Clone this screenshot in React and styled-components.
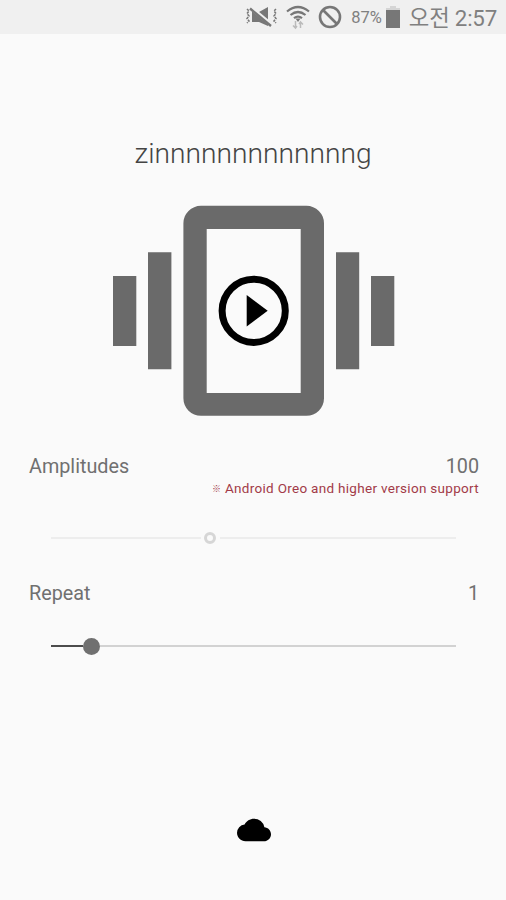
import React, { useState } from 'react'
import styled, { createGlobalStyle } from 'styled-components';

const App = () => {
    const [playing, setPlaying] = useState(false);

    return (
        <>
            <GlobalStyle />
            <Screen>
                <StatusBar>
                    <MuteIcon />
                    <WifiIcon />
                    <BlockedIcon />
                    <Percent>87%</Percent>
                    <BatteryIcon />
                    <Clock>오전 2:57</Clock>
                </StatusBar>
                <Title>zinnnnnnnnnnnnng</Title>
                <VibrateButton aria-pressed={playing} onClick={() => setPlaying(!playing)}>
                    <PhoneIcon />
                </VibrateButton>
                <Setting $space={35}>
                    <Row>
                        <Label>Amplitudes</Label>
                        <Label>100</Label>
                    </Row>
                    <Notice><Mark>※</Mark> Android Oreo and higher version support</Notice>
                    <Slider $top={30}>
                        <Track $width="150px" $color="#ededed" />
                        <Ring />
                        <Track $color="#ededed" />
                    </Slider>
                </Setting>
                <Setting $space={0}>
                    <Row>
                        <Label>Repeat</Label>
                        <Label>1</Label>
                    </Row>
                    <Slider $top={31}>
                        <Track $width="32px" $color="#4c4c4c" />
                        <Thumb />
                        <Track $color="#d2d2d2" />
                    </Slider>
                </Setting>
                <Footer>
                    <CloudIcon />
                </Footer>
            </Screen>
        </>
    )
}

const MuteIcon = () => (
    <svg width="34" height="24" viewBox="0 0 34 24" fill="none" stroke="#777">
        <path d="M8 7h7l9-5v19l-9-4H8z" fill="#777" stroke="none" />
        <path d="M6 2l23 19" stroke="#f0f0f0" strokeWidth="4" />
        <path d="M6 3.500l21 17.500" strokeWidth="2.400" />
        <path d="M3 4l2 2-2 2.500 2 2.500-2 2.500 2 2.500-2 2" strokeWidth="1.500" strokeDasharray="2.500 1" />
        <path d="M32 4l-2 2 2 2.500-2 2.500 2 2.500-2 2.500 2 2" strokeWidth="1.500" strokeDasharray="2.500 1" />
    </svg>
)

const WifiIcon = () => (
    <svg width="24" height="26" viewBox="0 0 24 26" fill="none" stroke="#777">
        <path d="M1 7.500Q12-1.500 23 7.500M4.500 11Q12 5 19.500 11M8 14.200Q12 11 16 14.200" strokeWidth="2.200" />
        <path d="M9.500 14.500h5L12 18z" fill="#777" stroke="none" />
        <path d="M9.500 17v7M7 21.500L9.500 24l1.500-2M14.500 24v-6M13 20l1.500-2 2.500 2.500" stroke="#bbb" strokeWidth="1.500" />
    </svg>
)

const BlockedIcon = () => (
    <svg width="24" height="24" viewBox="0 0 24 24" fill="none" stroke="#777" strokeWidth="2.600">
        <circle cx="12" cy="12" r="10" />
        <path d="M5 5l14 14" />
    </svg>
)

const BatteryIcon = () => (
    <svg width="14" height="23" viewBox="0 0 14 23">
        <path d="M4 0h6v2h4v3H0V2h4z" fill="#d5d5d5" />
        <path d="M0 4h14v18H0z" fill="#777" />
    </svg>
)

const PhoneIcon = () => (
    <svg width="282" height="212" viewBox="0 0 282 212" fill="#6a6a6a">
        <path d="M0 71h23.300v70H0zM35 47.300h23.400v117H35zM223 47.300h23.200v117H223zM258 71h23.300v70H258z" />
        <path fillRule="evenodd" d="M87.900 0.800h105.600a17.500 17.500 0 0 1 17.500 17.500v175a17.500 17.500 0 0 1-17.500 17.500h-105.600a17.500 17.500 0 0 1-17.500-17.500v-175a17.500 17.500 0 0 1 17.500-17.500zM93.700 24v164h94V24z" />
        <circle cx="140.700" cy="105.800" r="31.600" fill="none" stroke="#000" strokeWidth="7" />
        <path d="M133.700 90.100v31.400l21-15.700z" fill="#000" />
    </svg>
)

const CloudIcon = () => (
    <svg width="34" height="34" viewBox="0 0 24 24">
        <path d="M19.350 10.040A7.490 7.490 0 0 0 12 4C9.110 4 6.600 5.640 5.350 8.040A5.994 5.994 0 0 0 0 14c0 3.310 2.690 6 6 6h13c2.760 0 5-2.240 5-5 0-2.640-2.050-4.780-4.650-4.960z" />
    </svg>
)

export default App;

const GlobalStyle = createGlobalStyle`
  body {
    margin: 0;
    background: #fafafa;
  }
`;

const Screen = styled.div`
  box-sizing: border-box;
  height: 900px;
  display: flex;
  flex-direction: column;
  background: #fafafa;
  color: #707070;
  font-family: Roboto, 'Noto Sans CJK KR', sans-serif;
`;

const StatusBar = styled.header`
  box-sizing: border-box;
  height: 34px;
  flex: none;
  display: flex;
  align-items: center;
  justify-content: flex-end;
  gap: 8px;
  padding-right: 9px;
  background: #f0f0f0;
  color: #808080;
`;

const Percent = styled.span`
  font-size: 16.5px;
  font-weight: 400;
  margin: 1px -4px 0 1px;
`;

const Clock = styled.span`
  margin-left: 1px;
  padding-top: 2px;
  font-size: 22.3px;
  font-weight: 400;
  line-height: 30px;
  letter-spacing: -0.2px;
`;

const Title = styled.h1`
  margin: 103px 0 0;
  color: #444;
  font-size: 28.2px;
  font-weight: 300;
  line-height: 34px;
  text-align: center;
  white-space: nowrap;
`;

const VibrateButton = styled.button`
  align-self: center;
  display: block;
  margin: 34px 0 0 1px;
  padding: 0;
  border: 0;
  background: none;

  svg {
    display: block;
  }
`;

const Setting = styled.section`
  padding: 0 27px 0 29px;
  margin-bottom: ${(p) => p.$space}px;

  &:first-of-type {
    margin-top: 38px;
  }
`;

const Row = styled.div`
  display: flex;
  justify-content: space-between;
  line-height: 24px;
`;

const Label = styled.span`
  font-size: 19.8px;
`;

const Notice = styled.p`
  margin: -1px 0 0;
  color: #a23a48;
  font-size: 13.5px;
  line-height: 20px;
  letter-spacing: 0.3px;
  text-align: right;
`;

const Mark = styled.span`
  font-size: 9px;
  vertical-align: 1px;
`;

const Slider = styled.div`
  display: flex;
  align-items: center;
  height: 18px;
  margin: ${(p) => p.$top}px 23px 0 22px;
`;

const Track = styled.div`
  flex: ${(p) => (p.$width ? `0 0 ${p.$width}` : 1)};
  height: 2px;
  background: ${(p) => p.$color};
`;

const Ring = styled.div`
  box-sizing: border-box;
  width: 12px;
  height: 12px;
  margin: 0 4px 0 3px;
  border: 3px solid #d6d6d6;
  border-radius: 50%;
`;

const Thumb = styled.div`
  width: 17px;
  height: 17px;
  border-radius: 50%;
  background: #707070;
`;

const Footer = styled.footer`
  margin: auto 0 0 1px;
  height: 87px;
  text-align: center;
`;
